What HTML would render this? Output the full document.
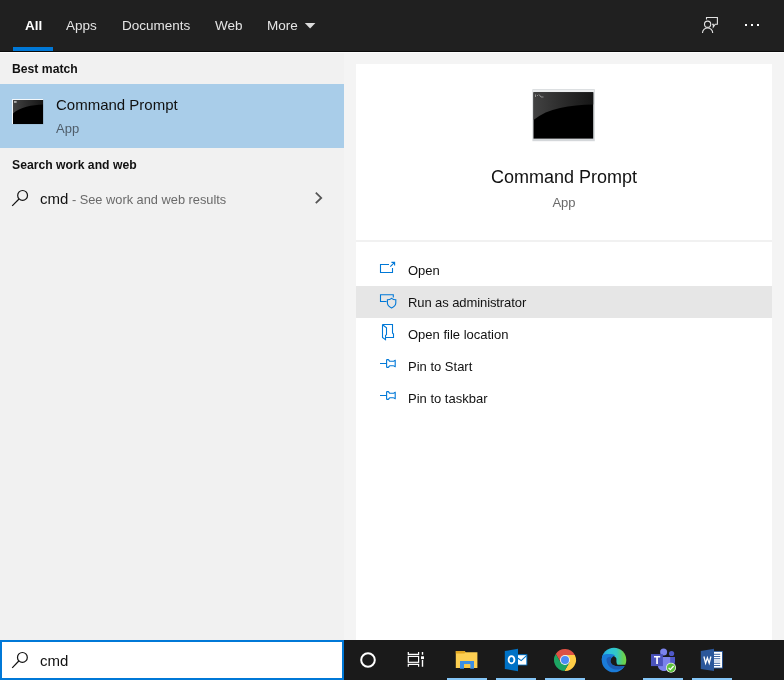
<!DOCTYPE html>
<html><head><meta charset="utf-8">
<style>
*{box-sizing:border-box;margin:0;padding:0}
html,body{width:784px;height:680px;overflow:hidden;background:#f4f4f4;font-family:"Liberation Sans",sans-serif;}
body{position:relative}
.abs{position:absolute}
#topbar{left:0;top:0;width:784px;height:52px;background:#202020;border-bottom:1px solid #0b0b0b}
#wline{left:0;top:52px;width:784px;height:1px;background:#fcfcfc}
.tab{position:absolute;top:18px;font-size:13.5px;color:#e4e4e4;white-space:nowrap;line-height:16px}
#underline{left:13px;top:47px;width:40px;height:4px;background:#0078d7}
#left{left:0;top:52px;width:344px;height:588px;background:#f1f1f1}
#sel{left:0;top:84px;width:344px;height:64px;background:#a9cde9}
.hdr{position:absolute;left:12px;font-size:12.2px;font-weight:bold;color:#111;line-height:16px;white-space:nowrap}
#card{left:356px;top:64px;width:416px;height:576px;background:#fff}
#sep{left:356px;top:240px;width:416px;height:2px;background:#f1f1f1}
#hover{left:356px;top:286px;width:416px;height:32px;background:#e6e6e6}
.act{position:absolute;left:408px;font-size:13px;color:#111;line-height:16px;white-space:nowrap}
#taskbar{left:0;top:640px;width:784px;height:40px;background:#1a1a1a}
#search{left:0;top:640px;width:344px;height:40px;background:#fff;border:2px solid #0078d7}
#icons{left:0;top:0;width:784px;height:680px}
</style></head><body>
<div id="root" style="position:absolute;left:0;top:0;width:784px;height:680px;will-change:transform">
<div id="topbar" class="abs"></div>
<div class="tab" id="t1" style="left:25px;font-weight:bold;color:#fff">All</div>
<div class="tab" id="t2" style="left:66px">Apps</div>
<div class="tab" id="t3" style="left:122px">Documents</div>
<div class="tab" id="t4" style="left:215px">Web</div>
<div class="tab" id="t5" style="left:267px">More</div>
<div id="underline" class="abs"></div>
<div id="left" class="abs"></div>
<div id="wline" class="abs"></div>
<div id="sel" class="abs"></div>
<div class="hdr" id="h1" style="top:61px">Best match</div>
<div class="hdr" id="h2" style="top:157px">Search work and web</div>
<div class="abs" id="cp1" style="left:56px;top:96px;font-size:15px;color:#111;white-space:nowrap;line-height:18px">Command Prompt</div>
<div class="abs" id="app1" style="left:56px;top:121px;font-size:13px;color:#4f5d6a;white-space:nowrap;line-height:16px">App</div>
<div class="abs" id="cmd1" style="left:40px;top:190px;font-size:15px;color:#111;white-space:nowrap;line-height:18px">cmd<span id="see" style="font-size:12.8px;color:#6a6a6a"> - See work and web results</span></div>
<div id="card" class="abs"></div>
<div id="sep" class="abs"></div>
<div id="hover" class="abs"></div>
<div class="abs" id="cp2" style="left:356px;width:416px;text-align:center;top:166px;font-size:18px;color:#111;line-height:22px">Command Prompt</div>
<div class="abs" id="app2" style="left:356px;width:416px;text-align:center;top:195px;font-size:13px;color:#6a6a6a;line-height:16px">App</div>
<div class="act" id="a1" style="top:263px">Open</div>
<div class="act" id="a2" style="top:295px;letter-spacing:-0.09px">Run as administrator</div>
<div class="act" id="a3" style="top:327px">Open file location</div>
<div class="act" id="a4" style="top:359px">Pin to Start</div>
<div class="act" id="a5" style="top:391px">Pin to taskbar</div>
<div id="taskbar" class="abs"></div>
<div id="search" class="abs"></div>
<div class="abs" id="cmd2" style="left:40px;top:652px;font-size:15px;color:#111;line-height:18px">cmd</div>
<svg id="icons" class="abs" viewBox="0 0 784 680">

<defs>
<linearGradient id="gloss" x1="0" y1="0" x2="1" y2="0"><stop offset="0" stop-color="#424242"/><stop offset="0.5" stop-color="#2b2b2b"/><stop offset="1" stop-color="#151515"/></linearGradient>
<linearGradient id="edgetop" x1="0" y1="0" x2="1" y2="0"><stop offset="0" stop-color="#22a4e2"/><stop offset="0.35" stop-color="#2cc3d8"/><stop offset="0.6" stop-color="#33c8c4"/><stop offset="0.85" stop-color="#63d158"/><stop offset="1" stop-color="#7ad63c"/></linearGradient>
</defs>
<!-- More triangle -->
<path d="M304.8 23 H315.4 L310.1 28.4 Z" fill="#dcdcdc"/>
<!-- feedback icon -->
<g fill="none" stroke="#e2e2e2" stroke-width="1.1">
<path d="M706.5 19.6 V17.5 H717.4 V24.2 H715.2 L713.3 27 V24.2 H711.9"/>
<circle cx="707.6" cy="24.2" r="3.1"/>
<path d="M702.5 33 A5.1 5.1 0 0 1 712.7 33"/>
</g>
<!-- dots -->
<rect x="745" y="24" width="2" height="2" fill="#fff"/><rect x="751" y="24" width="2" height="2" fill="#fff"/><rect x="757" y="24" width="2" height="2" fill="#fff"/>
<!-- search icon in list -->
<g fill="none" stroke="#111" stroke-width="1.2">
<circle cx="22.6" cy="195.4" r="4.9"/><path d="M19 199 L12.2 205.8"/>
<circle cx="22.4" cy="657.4" r="4.9"/><path d="M18.8 661 L12.2 667.8"/>
</g>
<!-- chevron -->
<path d="M315.8 192.7 L321.2 197.9 L315.8 203.1" fill="none" stroke="#555" stroke-width="1.8"/>
<!-- small cmd icon -->
<g>
<rect x="12.6" y="99.6" width="30.8" height="24.6" fill="#7d95a8"/><path d="M12 99 H43.2 V100 H13 V124 H12 Z" fill="#f4f8fb"/>
<rect x="13" y="100" width="30" height="24" fill="#000"/>
<path d="M13 100 H43 V104.5 C32 105 20 107 13 113.5 Z" fill="url(#gloss)"/>
<rect x="14" y="101.3" width="2.6" height="1.3" fill="#ddd"/>
</g>
<!-- big cmd icon -->
<g>
<rect x="532.4" y="89.2" width="62.4" height="52" fill="#d4d7da"/>
<rect x="533" y="90" width="61" height="2" fill="#eceeef"/>
<rect x="533.5" y="92.3" width="59.7" height="46.3" fill="#000"/>
<path d="M533.5 92.3 H593.2 V104.5 C570 105 548 108 533.5 120 Z" fill="url(#gloss)"/>
<path d="M535.5 94.5 V97 M537.5 95 V96 M539 94.5 L541 97 H543.5" stroke="#9a9a9a" stroke-width="0.9" fill="none"/>
</g>


<!-- action icons -->
<g fill="none" stroke="#0078d7" stroke-width="1.1">
<!-- open -->
<path d="M389 264.5 H380.5 V272.5 H392.5 V268"/>
<path d="M390.3 266.6 L394.6 262.4 M391.4 262.4 H394.6 V265.4"/>
<!-- run as admin -->
<path d="M386.6 301.5 H380.5 V294.7 H393.3 V297.4"/>
<path d="M391.6 298.3 C390.3 299.4 388.8 299.8 387.4 299.8 V303 C387.4 305.3 389.3 306.9 391.6 308 C393.9 306.9 395.8 305.3 395.8 303 V299.8 C394.4 299.8 392.9 299.4 391.6 298.3 Z"/>
<!-- open file location -->
<path d="M382.5 324.5 H392.5 V333 L393.5 334 V337.5 H385.5"/>
<path d="M382.5 324.5 V337.4 L385.5 339.6 V335.6 L386.5 334.6 V327.8 L382.5 324.7"/>
<!-- pins -->
<path d="M380 363.5 H386.5 M386.6 359.5 V367.5 M386.6 359.6 H388.2 C389 359.6 389 361.3 390 361.3 H393.3 C394.2 361.3 394.2 360.4 395.2 360.4 V366.6 C394.2 366.6 394.2 365.7 393.3 365.7 H390 C389 365.7 389 367.4 388.2 367.4 H386.6"/>
<path transform="translate(0 32)" d="M380 363.5 H386.5 M386.6 359.5 V367.5 M386.6 359.6 H388.2 C389 359.6 389 361.3 390 361.3 H393.3 C394.2 361.3 394.2 360.4 395.2 360.4 V366.6 C394.2 366.6 394.2 365.7 393.3 365.7 H390 C389 365.7 389 367.4 388.2 367.4 H386.6"/>
</g>
<!-- taskbar: cortana -->
<circle cx="368" cy="660" r="6.8" fill="none" stroke="#fff" stroke-width="2"/>
<!-- task view -->
<g fill="none" stroke="#fff" stroke-width="1.2">
<rect x="408.3" y="656.4" width="10.3" height="5.9"/>
<path d="M408.3 652.1 V654.3 H418.6 V652.1"/>
<path d="M408.3 666.8 V664.4 H418.6 V666.8"/>
<path d="M422.5 652.1 V654.8 M422.5 660 V666.8" stroke-width="1.4"/>
</g>
<rect x="421" y="656.3" width="3" height="2.8" fill="#fff"/>
<!-- indicators -->
<g fill="#85c6f7">
<rect x="447" y="678" width="40" height="2"/><rect x="496" y="678" width="40" height="2"/><rect x="545" y="678" width="40" height="2"/><rect x="643" y="678" width="40" height="2"/><rect x="692" y="678" width="40" height="2"/>
</g>
<!-- file explorer -->
<g>
<path d="M455.8 651 H464.6 L465.6 652.2 H477.4 V668 H455.8 Z" fill="#fdcf52"/>
<path d="M455.8 651 H464.6 L465.6 652.2 L464.4 653.6 H455.8 Z" fill="#e3a722"/>
<path d="M460 661 H474 V668.8 H470.2 V664.2 H464 V668.8 H460 Z" fill="#3b8ee5"/>
<rect x="464" y="664.2" width="6.2" height="3.8" fill="#f9c846"/>
</g>
<!-- outlook -->
<g>
<rect x="517.5" y="654.2" width="9.8" height="11.2" fill="#0072c6"/>
<rect x="518" y="655.2" width="8.3" height="9.4" fill="#fff"/>
<path d="M518 658.2 L521.2 660.6 L526.8 655.4" fill="none" stroke="#0072c6" stroke-width="1.1"/>
<path d="M504.8 651 L518 648.8 V671.2 L504.8 668.9 Z" fill="#0072c6"/>
<ellipse cx="511.5" cy="659.7" rx="2.9" ry="3.6" fill="none" stroke="#fff" stroke-width="1.8"/>
</g>
<!-- chrome -->
<g transform="translate(565 660)">
<path d="M-4.33 2.5 L-9.23 -5.99 A11 11 0 0 1 9.8 -5 L0 -5 Z" fill="#dd5144"/>
<path d="M0 -5 L9.8 -5 A11 11 0 0 1 -0.57 10.99 L4.33 2.5 Z" fill="#ffcd46"/>
<path d="M4.33 2.5 L-0.57 10.99 A11 11 0 0 1 -9.23 -5.99 L-4.33 2.5 Z" fill="#1da462"/>
<circle cx="0" cy="0" r="5" fill="#f1f1f1"/>
<circle cx="0" cy="0" r="4" fill="#4c8bf5"/>
</g>
<!-- edge -->
<g>
<clipPath id="edgeclip"><circle cx="614" cy="660" r="12.3"/></clipPath>
<g clip-path="url(#edgeclip)">
<path d="M601 647 H627 V664.7 H617.6 C616 663.6 616.6 660.5 616.4 658.6 C615.4 655.6 610 654.6 605 656.5 L601 660 Z" fill="url(#edgetop)"/>
<path d="M601 656 C604 653.6 612 653.4 615.2 655.4 C611.4 656.6 609.8 660 610.8 662.8 C612.4 666.4 618 667 625 665.9 C622.5 670.5 618 673 613 673 C606 673 601 667 601 660 Z" fill="#1a7bd8"/>
<path d="M606.5 659.5 C606.5 664.5 610.5 669 616 669.6 C619.5 669.6 623 668.3 625 665.9 C618 667 612.4 666.4 610.8 662.8 C610 660.6 610.3 658.6 611.6 657 C609.3 656.4 606.8 657.3 606.5 659.5 Z" fill="#1c5cb5"/>
</g>
</g>
<!-- teams -->
<g>
<circle cx="663.6" cy="652.1" r="3.5" fill="#7b83eb"/>
<circle cx="671.6" cy="653.5" r="2.6" fill="#5059c9"/>
<path d="M668 656.9 H675 V662 C675 664 673.5 665.5 671.5 665.5 H668 Z" fill="#5059c9"/>
<path d="M657.8 656.9 H670.2 V665 C670.2 668.5 667.5 671 664 671 C660.5 671 657.8 668.5 657.8 665 Z" fill="#7b83eb"/>
<rect x="651" y="654.1" width="11.9" height="12" fill="#4b53bc"/>
<path d="M654 656 H660.2 V657.6 H657.9 V664 H656.2 V657.6 H654 Z" fill="#fff"/>
<circle cx="671" cy="667.8" r="5" fill="#e9f3e2"/>
<circle cx="671" cy="667.8" r="4.2" fill="#5cc23a"/>
<path d="M668.6 667.9 L670.3 669.6 L673.6 666" fill="none" stroke="#fff" stroke-width="1.3"/>
</g>
<!-- word -->
<g>
<rect x="713.5" y="651" width="9.4" height="17.5" fill="#2b579a"/>
<rect x="714" y="651.9" width="8" height="15.7" fill="#fff"/>
<g stroke="#2b579a" stroke-width="0.9"><path d="M714 654.3 H720.2 M714 656.5 H720.2 M714 658.7 H720.2 M714 663.3 H720.2 M714 665.5 H720.2"/><path d="M714 661 H720.2" stroke="#9fb6d8"/></g>
<path d="M700.8 651 L714 648.8 V671.1 L700.8 669 Z" fill="#2b579a"/>
<path d="M703.9 656.5 L705.6 663.2 L707.4 657.8 L709.2 663.2 L710.9 656.5" fill="none" stroke="#fff" stroke-width="1.3" stroke-linejoin="miter"/>
</g>

</svg>
</div>
</body></html>
